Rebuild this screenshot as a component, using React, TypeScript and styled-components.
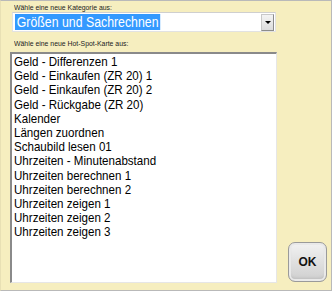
import React from "react";
import styled, { createGlobalStyle } from "styled-components";

const Global = createGlobalStyle`
  html, body { margin: 0; padding: 0; }
  body { width: 332px; height: 291px; overflow: hidden; }
`;

const Panel = styled.div`
  box-sizing: border-box;
  width: 332px;
  height: 291px;
  background: #f6eebf;
  border-top: 1px solid #b9b9b9;
  border-right: 1px solid #b9b9b9;
  border-bottom: 1px solid #b9b9b9;
  border-left: 1px solid #e8e0b4;
  padding: 2px 0 0 9px;
  display: flex;
  flex-direction: column;
  font-family: "Liberation Sans", Arial, sans-serif;
`;

const Label = styled.div`
  font-size: 8px;
  line-height: 9px;
  color: #222;
  padding-left: 4px;
  height: 9px;
  white-space: nowrap;
  transform: scaleX(0.86);
  transform-origin: 4px 0;
`;

const Select = styled.div`
  box-sizing: border-box;
  margin: 0 0 7px 2px;
  width: 264px;
  height: 20px;
  background: #fff;
  border: 1px solid #e2e2e2;
  border-top-color: #cfcfcf;
  display: flex;
  align-items: center;
  padding: 1px 1px 1px 2px;
`;

const Selected = styled.span`
  display: inline-block;
  background: #3399ff;
  color: #fff;
  font-size: 14px;
  line-height: 16px;
  padding: 0 2px;
  white-space: nowrap;
  transform: scaleX(0.88);
  transform-origin: 0 0;
`;

const Spacer = styled.div`
  flex: 1;
`;

const Arrow = styled.div`
  box-sizing: border-box;
  width: 13px;
  height: 17px;
  background: linear-gradient(#f4f4f4, #dcdcdc);
  border: 1px solid #8c8c8c;
  border-top-color: #c8c8c8;
  border-left-color: #c8c8c8;
  display: flex;
  align-items: center;
  justify-content: center;
  &::after {
    content: "";
    border-left: 3px solid transparent;
    border-right: 3px solid transparent;
    border-top: 3px solid #000;
  }
`;

const Row = styled.div`
  display: flex;
  align-items: flex-end;
  gap: 11px;
  margin-top: 4px;
`;

const List = styled.div`
  box-sizing: border-box;
  width: 267px;
  height: 231px;
  background: #fff;
  border-top: 2px solid #8a8a8a;
  border-left: 2px solid #8a8a8a;
  border-right: 1px solid #e6e6e6;
  border-bottom: 1px solid #e6e6e6;
  padding: 1px 0 0 2px;
`;

const Item = styled.div`
  font-size: 13px;
  line-height: 14.2px;
  color: #000;
  white-space: nowrap;
  transform: scaleX(0.89);
  transform-origin: 0 0;
`;

const OkButton = styled.div`
  box-sizing: border-box;
  width: 39px;
  height: 40px;
  margin-bottom: 1px;
  border-radius: 7px;
  border: 1px solid #9a9a9a;
  background: linear-gradient(#f2f2f2 0%, #e0e0e0 50%, #cfcfcf 100%);
  box-shadow: inset 0 0 0 2px #e9e9e9, inset 0 -3px 3px #bdbdbd;
  display: flex;
  align-items: center;
  justify-content: center;
  font-size: 12px;
  font-weight: bold;
  color: #111;
`;

const items = [
  "Geld - Differenzen 1",
  "Geld - Einkaufen (ZR 20) 1",
  "Geld - Einkaufen (ZR 20) 2",
  "Geld - Rückgabe (ZR 20)",
  "Kalender",
  "Längen zuordnen",
  "Schaubild lesen 01",
  "Uhrzeiten - Minutenabstand",
  "Uhrzeiten berechnen 1",
  "Uhrzeiten berechnen 2",
  "Uhrzeiten zeigen 1",
  "Uhrzeiten zeigen 2",
  "Uhrzeiten zeigen 3",
];

export default function App() {
  return (
    <>
      <Global />
      <Panel>
        <Label>Wähle eine neue Kategorie aus:</Label>
        <Select>
          <Selected>Größen und Sachrechnen</Selected>
          <Spacer />
          <Arrow />
        </Select>
        <Label>Wähle eine neue Hot-Spot-Karte aus:</Label>
        <Row>
          <List>
            {items.map((t) => (
              <Item key={t}>{t}</Item>
            ))}
          </List>
          <OkButton>OK</OkButton>
        </Row>
      </Panel>
    </>
  );
}
